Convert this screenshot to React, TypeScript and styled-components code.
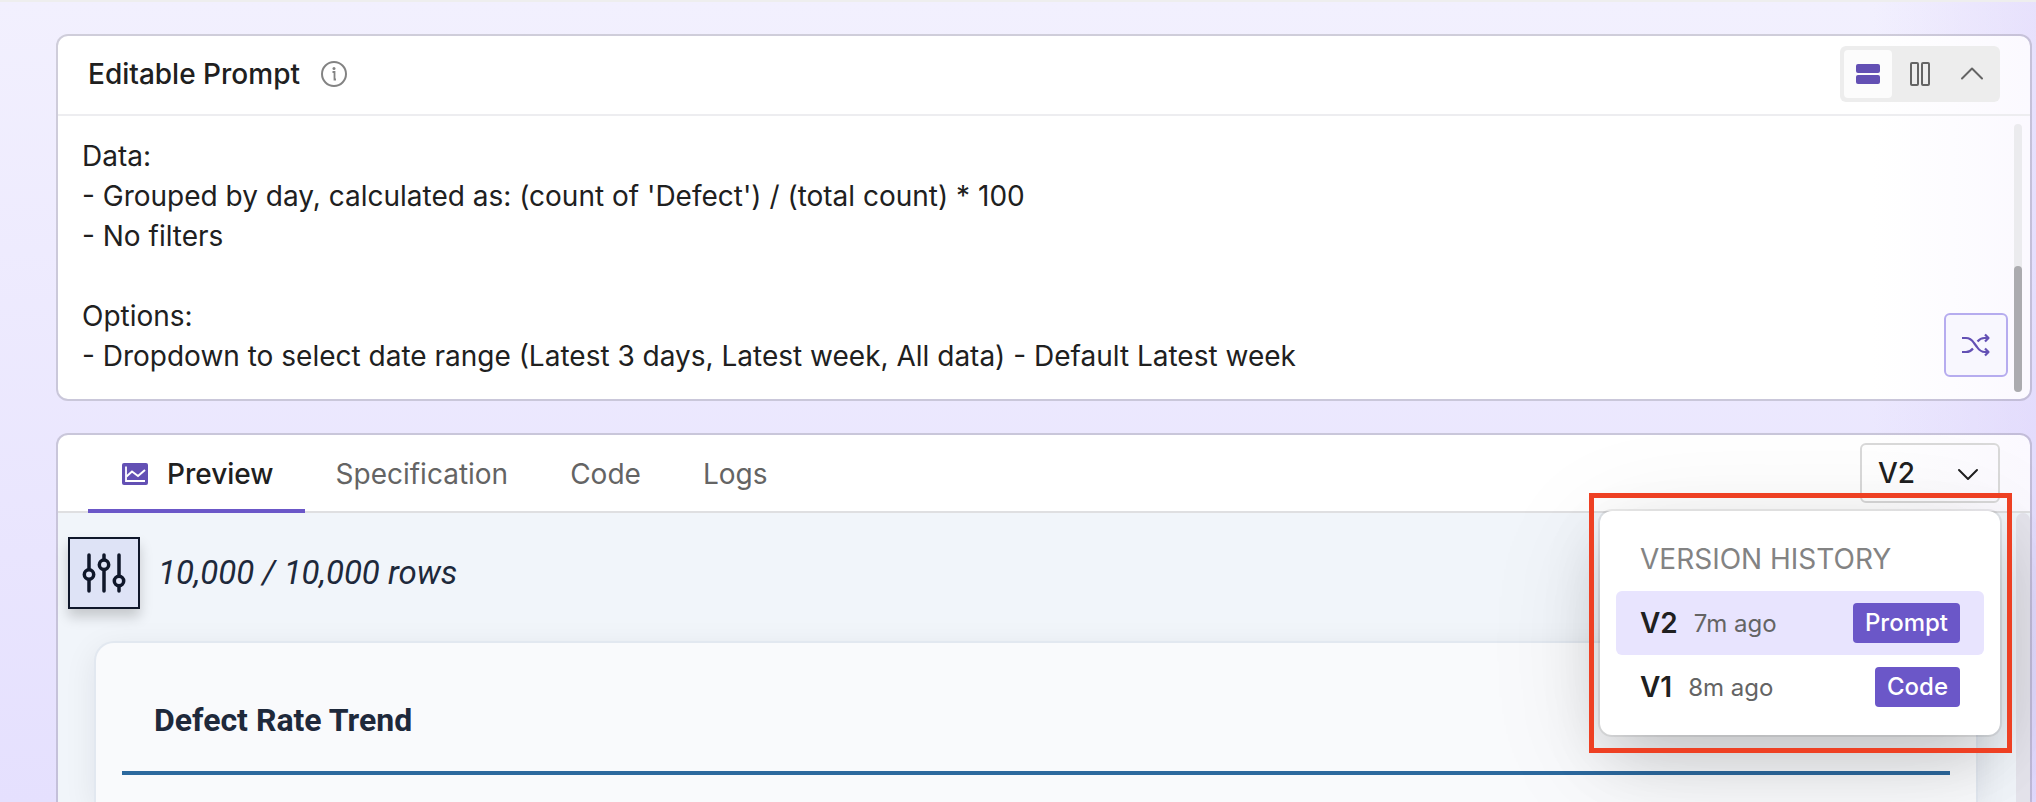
import React from "react";
import styled, { createGlobalStyle } from "styled-components";

const GlobalStyle = createGlobalStyle`
  *, *::before, *::after { box-sizing: border-box; }
  body { margin: 0; font-family: Inter, "Liberation Sans", sans-serif; font-optical-sizing: none; color: #202020; }
  button, textarea { font: inherit; color: inherit; margin: 0; font-optical-sizing: none; }
`;

const Page = styled.main`
  display: flex;
  flex-direction: column;
  gap: 32px;
  height: 100vh;
  overflow: hidden;
  padding: 32px 4px 0 56px;
  border-top: 2px solid #eeeeee;
  background: linear-gradient(90deg, transparent 92%, rgba(215, 203, 250, 0.4)),
    linear-gradient(180deg, #f2f0fe, #e5e0fe);
`;

const Panel = styled.section`
  display: flex;
  flex-direction: column;
  position: relative;
  border: 2px solid rgba(0, 0, 0, 0.14);
  border-radius: 12px;
  background: linear-gradient(90deg, #ffffff 92%, #fbf9ff);
  background-clip: padding-box;
`;

const PromptPanel = styled(Panel)`
  flex: none;
`;

const PreviewPanel = styled(Panel)`
  flex: 1 0 auto;
  border-bottom: 0;
  border-bottom-left-radius: 0;
  border-bottom-right-radius: 0;
`;

const PromptHeader = styled.header`
  display: flex;
  align-items: center;
  justify-content: space-between;
  height: 80px;
  padding: 0 30px 2px;
  border-bottom: 2px solid #ededf0;
`;

const TitleGroup = styled.div`
  display: flex;
  align-items: center;
  gap: 20px;
`;

const Title = styled.h2`
  margin: 0;
  font-size: 28px;
  font-weight: 500;
  line-height: 40px;
`;

const InfoButton = styled.button`
  display: flex;
  padding: 0;
  border: 0;
  background: none;
`;

const ToggleGroup = styled.div`
  display: flex;
  gap: 4px;
  padding: 4px;
  border-radius: 6px;
  background: #ededed;
`;

const ToggleButton = styled.button<{ $active?: boolean }>`
  display: grid;
  place-items: center;
  width: 48px;
  height: 48px;
  padding: 0;
  border: 0;
  border-radius: 4px;
  background: ${(p) => (p.$active ? "#fcfcfc" : "transparent")};
`;

const PromptBody = styled.div`
  display: flex;
  padding: 8px 8px 7px 24px;
`;

const PromptText = styled.textarea`
  flex: 1;
  display: block;
  height: 268px;
  padding: 12px 0;
  border: 0;
  outline: 0;
  resize: none;
  overflow: hidden;
  background: none;
  font-size: 28px;
  line-height: 40px;
`;

const PromptTools = styled.div`
  display: flex;
  align-items: flex-end;
  padding: 0 6px 15px 0;
`;

const ShuffleButton = styled.button`
  display: grid;
  place-items: center;
  width: 64px;
  height: 64px;
  padding: 0;
  border: 2px solid #b6acef;
  border-radius: 6px;
  background: #f8f7fe;
`;

const ScrollTrack = styled.div`
  display: flex;
  align-items: flex-end;
  width: 8px;
  border-radius: 4px;
  background: #ebebee;
`;

const ScrollThumb = styled.div`
  width: 8px;
  height: 47%;
  border-radius: 4px;
  background: #ababaf;
`;

const TabBar = styled.header`
  display: flex;
  align-items: center;
  justify-content: space-between;
  height: 78px;
  padding: 0 30px;
  border-bottom: 2px solid #dfdfe1;
`;

const Tabs = styled.div`
  display: flex;
  align-self: stretch;
  margin-bottom: -2px;
`;

const Tab = styled.button<{ $active?: boolean }>`
  display: flex;
  align-items: center;
  gap: 16px;
  padding: 4px 31px 0;
  border: 0;
  border-bottom: 4px solid ${(p) => (p.$active ? "#6b57c8" : "transparent")};
  background: none;
  color: ${(p) => (p.$active ? "#202020" : "#646464")};
  font-size: 28px;
  font-weight: ${(p) => (p.$active ? 500 : 400)};
  line-height: 40px;
`;

const VersionButton = styled.button`
  display: flex;
  align-items: center;
  justify-content: space-between;
  width: 140px;
  height: 60px;
  padding: 0 18px 0 16px;
  border: 2px solid #d9d9d9;
  border-radius: 6px;
  background: none;
  font-size: 28px;
  font-weight: 500;
`;

const Menu = styled.div`
  position: absolute;
  top: 76px;
  right: 30px;
  width: 400px;
  padding: 16px;
  border-radius: 12px;
  background: #ffffff;
  box-shadow: 0 0 0 2px rgba(0, 0, 0, 0.07), 0 24px 120px rgba(0, 0, 0, 0.1),
    0 24px 64px -8px rgba(0, 0, 0, 0.18);
`;

const MenuTitle = styled.h3`
  margin: 0;
  padding: 0 24px;
  color: #838383;
  font-size: 28px;
  font-weight: 400;
  line-height: 64px;
`;

const MenuItem = styled.button<{ $selected?: boolean }>`
  display: flex;
  align-items: center;
  gap: 16px;
  width: 100%;
  height: 64px;
  padding: 0 24px;
  border: 0;
  border-radius: 6px;
  background: ${(p) => (p.$selected ? "#e8e4fe" : "transparent")};
  text-align: left;
`;

const VersionName = styled.span`
  font-size: 28px;
  font-weight: 600;
`;

const VersionAge = styled.span`
  flex: 1;
  color: #646464;
  font-size: 24px;
`;

const Badge = styled.span`
  padding: 0 12px;
  border-radius: 4px;
  background: #6b57c8;
  color: #ffffff;
  font-size: 24px;
  font-weight: 500;
  line-height: 40px;
`;

const Highlight = styled.div`
  position: absolute;
  inset: -18px -12px -18px -11px;
  border: 5px solid #ee4023;
  pointer-events: none;
`;

const PreviewBody = styled.div`
  display: flex;
  flex: 1;
  background: #f1f5fa;
`;

const PreviewContent = styled.div`
  flex: 1;
  display: flex;
  flex-direction: column;
  gap: 32px;
  padding: 24px 38px 0 10px;
  font-family: Roboto, sans-serif;
  color: #1e293b;
`;

const PreviewTrack = styled.div`
  width: 14px;
  border-radius: 7px 7px 0 0;
  background: #e5e4ec;
`;

const RowsBar = styled.div`
  display: flex;
  align-items: center;
  gap: 18px;
`;

const FilterButton = styled.button`
  display: grid;
  place-items: center;
  width: 72px;
  height: 72px;
  padding: 0;
  border: 2px solid #0f172a;
  background: #dee3f6;
  box-shadow: 0 8px 12px rgba(0, 0, 0, 0.18);
`;

const RowCount = styled.p`
  margin: 0;
  font-size: 33px;
  font-style: italic;
  line-height: 40px;
`;

const ChartCard = styled.article`
  flex: 1;
  margin-left: 26px;
  padding: 24px 26px;
  border: 2px solid #e2e8f0;
  border-bottom: 0;
  border-radius: 20px 20px 0 0;
  background: #f9fafc;
  box-shadow: 0 8px 32px rgba(15, 23, 42, 0.08);
`;

const ChartTitle = styled.h1`
  margin: 0;
  padding: 33px 32px 31px;
  border-bottom: 4px solid #2c699e;
  font-size: 32px;
  font-weight: 700;
  line-height: 40px;
`;

const InfoIcon = () => (
  <svg width="28" height="28" viewBox="0 0 28 28" fill="none" stroke="#838383" strokeWidth="2">
    <circle cx="14" cy="14" r="12" />
    <path d="M12.500 12h2v7.500h1.500" strokeWidth="1.800" />
    <circle cx="14" cy="8.500" r="1.500" fill="#838383" stroke="none" />
  </svg>
);

const RowsIcon = () => (
  <svg width="24" height="24" viewBox="0 0 24 24" fill="#6350b4">
    <rect y="2" width="24" height="9" rx="2" />
    <rect y="13" width="24" height="9" rx="2" />
  </svg>
);

const ColumnsIcon = () => (
  <svg width="24" height="24" viewBox="0 0 24 24" fill="none" stroke="#646464" strokeWidth="2">
    <rect x="3" y="1" width="7" height="22" rx="1" />
    <rect x="14" y="1" width="7" height="22" rx="1" />
  </svg>
);

const ChevronIcon = ({ up, color }: { up?: boolean; color: string }) => (
  <svg width="24" height="24" viewBox="0 0 24 24" fill="none" stroke={color} strokeWidth="2" strokeLinecap="round" strokeLinejoin="round">
    <path d={up ? "M2 16.500 12 6.500l10 10" : "M3 9l9 9 9-9"} />
  </svg>
);

const ShuffleIcon = () => (
  <svg width="30" height="24" viewBox="0 0 30 24" fill="none" stroke="#6350b4" strokeWidth="2.200" strokeLinejoin="round">
    <path d="M1 5h4c4 0 6 2 8 5l3 4c2 3 4 5 8 5h3" />
    <path d="M1 19h4c3 0 5-1 7-3.500" />
    <path d="M16.500 8.500c2-2.500 4-3.500 7-3.500h3.500" />
    <path d="M24 1.500l3.500 3.500-3.500 3.500M24 15.500l3.500 3.500-3.500 3.500" />
  </svg>
);

const ChartIcon = () => (
  <svg width="32" height="32" viewBox="0 0 32 32" fill="none">
    <rect x="3" y="5" width="26" height="22" rx="2" fill="#6350b4" />
    <path d="M7 8.500v14.500h19" stroke="#fff" strokeWidth="1.800" />
    <path d="M7.500 18.500l5.500-5 6 4.500 7-6" stroke="#fff" strokeWidth="2" />
  </svg>
);

const SlidersIcon = () => (
  <svg width="44" height="40" viewBox="0 0 44 40" fill="none" stroke="#0f172a" strokeWidth="3.500" strokeLinecap="round">
    <path d="M7 2v14M7 27v11M22 2v4M22 18v20M37 2v20M37 34v4" />
    <circle cx="7" cy="21.500" r="4.700" />
    <circle cx="22" cy="11.800" r="4.700" />
    <circle cx="37" cy="28" r="4.700" />
  </svg>
);

const promptText = `Data:
- Grouped by day, calculated as: (count of 'Defect') / (total count) * 100
- No filters

Options:
- Dropdown to select date range (Latest 3 days, Latest week, All data) - Default Latest week`;

const versions = [
  { name: "V2", age: "7m ago", source: "Prompt" },
  { name: "V1", age: "8m ago", source: "Code" },
];

export default function App() {
  return (
    <>
      <GlobalStyle />
      <Page>
        <PromptPanel>
          <PromptHeader>
            <TitleGroup>
              <Title id="prompt-title">Editable Prompt</Title>
              <InfoButton aria-label="About this prompt"><InfoIcon /></InfoButton>
            </TitleGroup>
            <ToggleGroup role="group" aria-label="Layout">
              <ToggleButton $active aria-label="Stacked" aria-pressed="true"><RowsIcon /></ToggleButton>
              <ToggleButton aria-label="Side by side"><ColumnsIcon /></ToggleButton>
              <ToggleButton aria-label="Collapse"><ChevronIcon up color="#646464" /></ToggleButton>
            </ToggleGroup>
          </PromptHeader>
          <PromptBody>
            <PromptText aria-labelledby="prompt-title" defaultValue={promptText} spellCheck={false} />
            <PromptTools>
              <ShuffleButton aria-label="Shuffle"><ShuffleIcon /></ShuffleButton>
            </PromptTools>
            <ScrollTrack aria-hidden="true"><ScrollThumb /></ScrollTrack>
          </PromptBody>
        </PromptPanel>

        <PreviewPanel>
          <TabBar>
            <Tabs role="tablist">
              <Tab $active role="tab" aria-selected="true"><ChartIcon />Preview</Tab>
              <Tab role="tab" aria-selected="false">Specification</Tab>
              <Tab role="tab" aria-selected="false">Code</Tab>
              <Tab role="tab" aria-selected="false">Logs</Tab>
            </Tabs>
            <VersionButton aria-haspopup="menu" aria-expanded="true">
              V2
              <ChevronIcon color="#202020" />
            </VersionButton>
          </TabBar>
          <PreviewBody>
            <PreviewContent>
              <RowsBar>
                <FilterButton aria-label="Filters"><SlidersIcon /></FilterButton>
                <RowCount>10,000 / 10,000 rows</RowCount>
              </RowsBar>
              <ChartCard>
                <ChartTitle>Defect Rate Trend</ChartTitle>
              </ChartCard>
            </PreviewContent>
            <PreviewTrack aria-hidden="true" />
          </PreviewBody>
          <Menu>
            <MenuTitle>VERSION HISTORY</MenuTitle>
            {versions.map((version, index) => (
              <MenuItem key={version.name} $selected={index === 0}>
                <VersionName>{version.name}</VersionName>
                <VersionAge>{version.age}</VersionAge>
                <Badge>{version.source}</Badge>
              </MenuItem>
            ))}
            <Highlight />
          </Menu>
        </PreviewPanel>
      </Page>
    </>
  );
}
